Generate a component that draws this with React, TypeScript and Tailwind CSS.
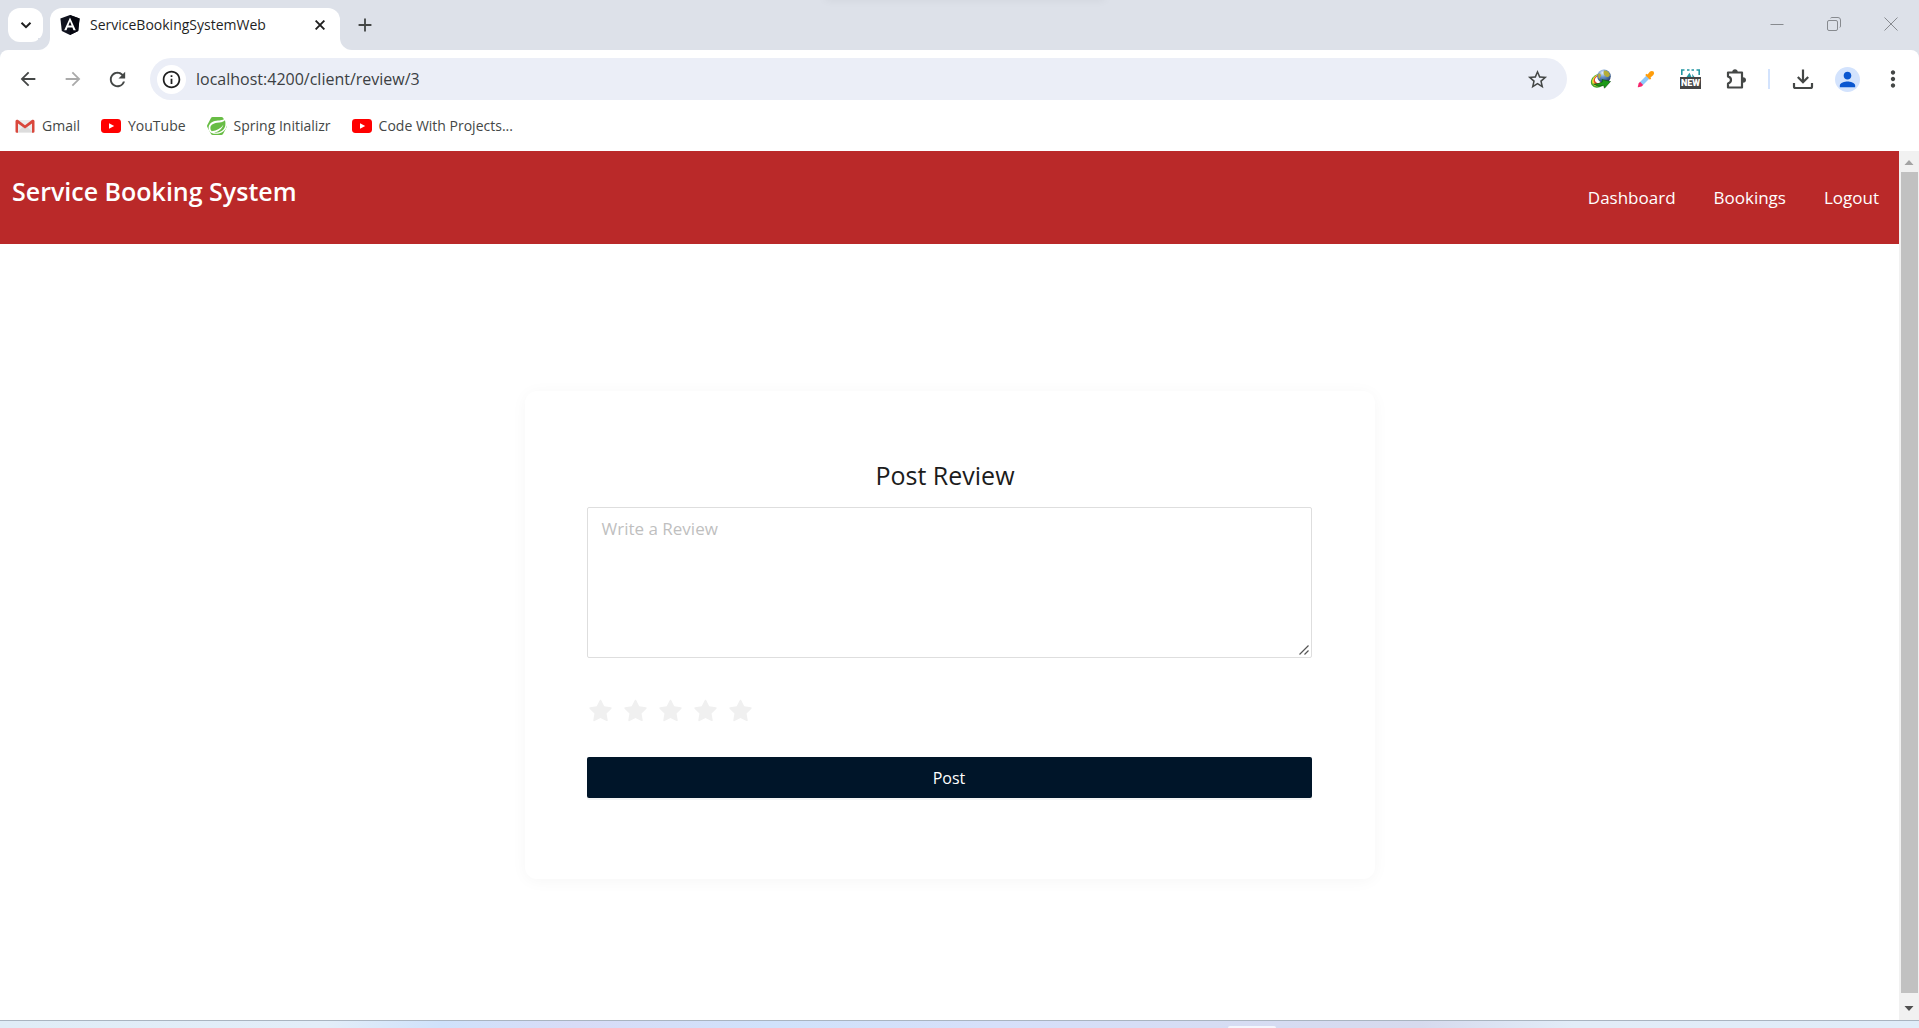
import React, { useState } from "react";
import {
  MdAdd,
  MdArrowBack,
  MdArrowForward,
  MdInfoOutline,
  MdMoreVert,
  MdPerson,
  MdRefresh,
  MdStarBorder,
} from "react-icons/md";
import { AiFillStar } from "react-icons/ai";

function AngularLogo() {
  return (
    <svg viewBox="0 0 20 20" className="size-5 shrink-0" aria-hidden="true">
      <path d="M10 0 19.6 3.4 18.2 16 10 20 1.8 16 .4 3.4Z" fill="#10131f" />
      <path d="M10 0 19.6 3.4 18.2 16 10 20Z" fill="#05060f" />
      <path d="M10 2.4 4.2 15.2H6.5L7.6 12.4H12.4L13.5 15.2H15.8ZM10 6.6 11.6 10.5H8.4Z" fill="#fff" fillRule="evenodd" />
    </svg>
  );
}

function GmailLogo() {
  return (
    <svg viewBox="0 0 20 20" className="size-5" aria-hidden="true">
      <path d="M2 4H18V16.5H2Z" fill="#ececec" />
      <path d="M2 16.5 8 10.5 10 12 12 10.5 18 16.5Z" fill="#dcdcdc" />
      <path d="M.5 5V15.5Q.5 16.8 1.8 16.8H3V7.4L10 12.6 17 7.4V16.8H18.2Q19.5 16.8 19.5 15.5V5Q19 3.2 17.2 3.8L10 9.2 2.8 3.8Q1 3.2 .5 5Z" fill="#d9473c" />
    </svg>
  );
}

function YouTubeLogo() {
  return (
    <svg viewBox="0 0 20 20" className="size-5" aria-hidden="true">
      <rect x="0" y="3" width="20" height="14" rx="3.4" fill="#f00" />
      <path d="M8 7.2 13.2 10 8 12.8Z" fill="#fff" />
    </svg>
  );
}

function SpringLogo() {
  return (
    <svg viewBox="0 0 20 20" className="size-5" aria-hidden="true">
      <path d="M5.600 1H14.400Q15.600 1 16.200 2L20 9Q20.400 10 19.800 11L16 18Q15.400 19 14.200 19H5.800Q4.600 19 4 18L.3 11Q-.2 10 .3 9L4 2Q4.500 1 5.600 1Z" fill="#68bd45" />
      <path d="M19.400 1C16.500 4.800 13.500 4.200 9.500 4.700 4.800 5.300 1.600 8 1.600 12 1.600 15.200 3.600 17.300 6.800 17.700 13.500 18.500 19 15 20 9.500 20.500 6.500 20.300 3.500 19.400 1Z" fill="#fff" />
      <path d="M18 4.300C15.800 6.600 13 6.400 10 6.700 6 7.200 3.400 9.200 3.400 12 3.400 13.500 3.900 14.500 4.700 15.200 10 14.600 14 12.500 16.400 8.800 15 13.300 11.500 15.900 6.800 16.600 12.500 17.300 17.500 14.300 18.300 9.500 18.600 7.500 18.500 5.800 18 4.300Z" fill="#68bd45" />
    </svg>
  );
}

function GlobeArrowIcon() {
  return (
    <svg viewBox="0 0 22 20" className="h-5 w-[22px]" aria-hidden="true">
      <defs>
        <radialGradient id="globe" cx="0.4" cy="0.25" r="0.8">
          <stop offset="0" stopColor="#e8f1fb" />
          <stop offset="0.4" stopColor="#6b95cc" />
          <stop offset="1" stopColor="#16325f" />
        </radialGradient>
      </defs>
      <g transform="rotate(-35 8 12)">
        <ellipse cx="8.500" cy="12" rx="8" ry="6.500" fill="#46a832" />
        <ellipse cx="9" cy="11.700" rx="6.900" ry="5.500" fill="#f7e23a" />
        <ellipse cx="9.500" cy="11.400" rx="5.600" ry="4.500" fill="#e04a33" />
        <ellipse cx="10" cy="11.200" rx="4.400" ry="3.400" fill="#fff" />
      </g>
      <circle cx="14" cy="7.200" r="6.800" fill="url(#globe)" />
      <path d="M14 1.500Q18.500 1 20 6 18.500 9 16 7.500 12.500 5.500 14 1.500ZM8.500 4.500Q10.500 4 11 6.500L9.500 10Q7.500 8 8.500 4.500Z" fill="#b5ad38" />
      <path d="M3.500 15Q8 15.500 12.500 12.800L12 10.500 20.500 12.500 14.500 19.200 13.700 16.500Q8 18.500 3.500 15Z" fill="#1c9a18" stroke="#0b4d0c" strokeWidth="0.600" />
    </svg>
  );
}

function EyedropperIcon() {
  return (
    <svg viewBox="0 0 18 18" className="size-[18px]" aria-hidden="true">
      <path d="M9.500 5.500 12.500 8.500 6 15 3 15 3 12Z" fill="#8ec8fa" />
      <path d="M3 11.800 6.200 15 4.500 16.400 1.200 17.200Q.7 17.300 .8 16.700L1.600 13.500Z" fill="#f5256c" />
      <path d="M8.200 5 9.700 3.800 10.600 4.500 13 1.600Q15 .2 16.600 1.600 17.700 3.200 16.400 5L13.500 7.500 14.200 8.400 12.900 9.800Z" fill="#ff9d0a" />
    </svg>
  );
}

function NewCaptureIcon() {
  return (
    <span className="flex w-[21px] flex-col" aria-hidden="true">
      <svg viewBox="0 0 21 8" className="h-2 w-[21px]">
        <path d="M1.800 6V1H4.500M7 1H9.500M11.500 1H14M16.500 1H19.200V6" fill="none" stroke="#2397a3" strokeWidth="1.600" />
        <path d="M6.500 8 9.500 3.800 11.500 8ZM12 4.800 14.500 8H12.500Z" fill="#2397a3" />
      </svg>
      <span className="flex h-3 items-center justify-center bg-[#444] font-[Roboto] text-[9px] leading-3 font-black text-white">NEW</span>
    </span>
  );
}

function PuzzleIcon() {
  return (
    <svg viewBox="0 0 22 22" className="size-[22px]" fill="none" aria-hidden="true">
      <path d="M3 4.500H17V19.500H3V15.600Q6 14.500 6 12T3 8.400Z" stroke="#444746" strokeWidth="2.200" strokeLinejoin="round" />
      <path d="M7.200 4Q7.500 1.200 10 1.200T12.800 4ZM18 9.200Q21 9.500 21 12T18 14.800Z" fill="#444746" />
    </svg>
  );
}

function DownloadIcon() {
  return (
    <svg viewBox="0 0 22 22" className="size-[22px]" fill="none" stroke="#444746" strokeWidth="2.200" aria-hidden="true">
      <path d="M11 1.500V14M5.800 9 11 14.200 16.200 9M2 15V18.500Q2 20 3.500 20H18.500Q20 20 20 18.500V15" />
    </svg>
  );
}

function WindowControls() {
  const cell = "flex h-12 w-[57px] items-center justify-center text-[#878a8f]";
  return (
    <div className="ml-auto flex">
      <button className={cell} aria-label="Minimize">
        <svg viewBox="0 0 14 14" className="size-3.5" stroke="currentColor"><path d="M.5 7.500H13.500" /></svg>
      </button>
      <button className={cell} aria-label="Restore">
        <svg viewBox="0 0 14 14" className="size-3.5" fill="none" stroke="currentColor">
          <rect x="0.500" y="3.500" width="10" height="10" rx="1.500" />
          <path d="M3.500 1.200Q4 .5 5 .5H11Q13.500 .5 13.500 3V9Q13.500 10.200 12.800 10.500" />
        </svg>
      </button>
      <button className={cell} aria-label="Close window">
        <svg viewBox="0 0 14 14" className="size-3.5" stroke="currentColor"><path d="M.5 .5 13.500 13.500M13.500 .5 .5 13.500" /></svg>
      </button>
    </div>
  );
}

function TabStrip() {
  return (
    <div className="relative flex h-[50px] overflow-hidden bg-[#dde1e9]">
      <div className="absolute -top-2 left-[43%] h-2 w-[280px] shadow-[0_0_10px_rgba(0,0,0,0.06)]" />
      <button className="mt-2 ml-2 flex h-[34px] w-[35px] items-center justify-center rounded-xl bg-white text-[#1f1f1f]" aria-label="Search tabs">
        <svg viewBox="0 0 12 12" className="size-3" fill="none" stroke="currentColor" strokeWidth="2" aria-hidden="true"><path d="M1.500 3.700 6 8.200 10.500 3.700" /></svg>
      </button>
      <div className="relative mt-2 ml-[7px] flex w-[290px] items-center gap-2.5 rounded-t-xl bg-white pr-[15px] pb-2 pl-2.5">
        <span className="absolute bottom-0 -left-3 size-3 bg-white"><span className="block size-3 rounded-br-xl bg-[#dde1e9]" /></span>
        <span className="absolute -right-3 bottom-0 size-3 bg-white"><span className="block size-3 rounded-bl-xl bg-[#dde1e9]" /></span>
        <AngularLogo />
        <span className="text-sm text-[#1f1f1f]">ServiceBookingSystemWeb</span>
        <button className="ml-auto text-[#1f1f1f]" aria-label="Close tab">
          <svg viewBox="0 0 10 10" className="size-2.5" stroke="currentColor" strokeWidth="1.900" aria-hidden="true"><path d="M.6 .6 9.400 9.400M9.400 .6 .6 9.400" /></svg>
        </button>
      </div>
      <button className="ml-[13px] flex h-[50px] w-6 items-center justify-center text-[#444746]" aria-label="New tab"><MdAdd size={22} /></button>
      <WindowControls />
    </div>
  );
}

function Tool({ label, children }: { label: string; children: React.ReactNode }) {
  return (
    <button className="flex h-[42px] w-[45px] shrink-0 items-center justify-center text-[#444746]" aria-label={label}>
      {children}
    </button>
  );
}

function Toolbar() {
  return (
    <div className="bg-[#dde1e9]">
      <div className="flex rounded-t-lg bg-white pt-2 pr-1 pl-[5px]">
        <Tool label="Back"><MdArrowBack size={22} /></Tool>
        <Tool label="Forward"><MdArrowForward size={22} className="text-[#aaa]" /></Tool>
        <Tool label="Reload"><MdRefresh size={23} /></Tool>
        <div className="ml-2.5 flex h-[42px] flex-1 items-center rounded-full bg-[#ebeef7] pr-[18px] pl-[7px]">
          <button className="flex size-[29px] items-center justify-center rounded-full bg-white text-[#1f1f1f]" aria-label="Site information"><MdInfoOutline size={21} /></button>
          <input aria-label="Address" className="h-8 flex-1 bg-transparent pl-2.5 text-base text-[#3c3f43] outline-none" defaultValue="localhost:4200/client/review/3" />
          <button className="text-[#444746]" aria-label="Bookmark this page"><MdStarBorder size={23} /></button>
        </div>
        <div className="w-[11px]" />
        <Tool label="Download manager"><GlobeArrowIcon /></Tool>
        <Tool label="Color picker"><EyedropperIcon /></Tool>
        <Tool label="Capture"><NewCaptureIcon /></Tool>
        <Tool label="Extensions"><PuzzleIcon /></Tool>
        <div className="flex w-[22px] items-center justify-center"><div className="h-5 w-0.5 bg-[#d3e3fd]" /></div>
        <Tool label="Downloads"><DownloadIcon /></Tool>
        <Tool label="Profile">
          <span className="flex size-[25px] items-center justify-center rounded-full bg-[#d3e3fd] text-[#0b57d0]"><MdPerson size={23} /></span>
        </Tool>
        <Tool label="Menu"><MdMoreVert size={26} /></Tool>
      </div>
    </div>
  );
}

const bookmarks = [
  { label: "Gmail", Icon: GmailLogo },
  { label: "YouTube", Icon: YouTubeLogo },
  { label: "Spring Initializr", Icon: SpringLogo },
  { label: "Code With Projects...", Icon: YouTubeLogo },
];

function BookmarksBar() {
  return (
    <nav className="flex h-[51px] items-center gap-[21px] bg-white pl-[15px]" aria-label="Bookmarks">
      {bookmarks.map(({ label, Icon }) => (
        <a key={label} href="#" className="flex items-center gap-[7px] text-sm text-[#444746]"><Icon />{label}</a>
      ))}
    </nav>
  );
}

function AppHeader() {
  return (
    <header className="flex h-[93px] items-center justify-between bg-[#ba2929] pr-5 pl-3 text-white">
      <h1 className="mt-5 self-start text-[25px] leading-10 font-semibold">Service Booking System</h1>
      <nav className="flex gap-[38px] text-[17px]" aria-label="Main">
        <a href="#">Dashboard</a>
        <a href="#">Bookings</a>
        <a href="#">Logout</a>
      </nav>
    </header>
  );
}

function ReviewCard() {
  const [rating, setRating] = useState(0);
  return (
    <form className="mx-auto mt-[147px] mb-32 w-full max-w-[850px] rounded-xl pt-[62px] pr-[63px] pb-[81px] pl-[62px] shadow-[0_2px_16px_rgba(0,0,0,0.04)]" onSubmit={(e) => e.preventDefault()}>
      <h2 className="mb-2.5 pr-2 text-center text-[25px] leading-[44px] font-medium text-[#1c1c1c]">Post Review</h2>
      <div className="relative">
        <textarea aria-label="Write a Review" placeholder="Write a Review" className="block h-[151px] w-full resize-none rounded-xs border border-[#dedede] px-3.5 py-[7px] text-[17px] leading-7 text-[#262626] outline-none placeholder:text-[#bfbfbf]" />
        <svg viewBox="0 0 10 10" className="absolute right-[3px] bottom-[3px] size-2.5" stroke="#555" strokeWidth="1.200" aria-hidden="true">
          <path d="M.5 9.500 9.500 .5M5.500 9.500 9.500 5.500" />
        </svg>
      </div>
      <div className="mt-10 flex gap-2" role="group" aria-label="Rating">
        {[1, 2, 3, 4, 5].map((n) => (
          <button key={n} type="button" aria-label={`${n} star`} onClick={() => setRating(n)} className={n <= rating ? "text-[#fadb14]" : "text-[#f0f0f0]"}>
            <AiFillStar size={27} />
          </button>
        ))}
      </div>
      <button type="submit" className="mt-8 block h-[41px] w-full rounded-xs bg-[#001529] text-base text-white shadow-[0_2px_0_rgba(0,0,0,0.045)]">Post</button>
    </form>
  );
}

function Scrollbar() {
  return (
    <div className="flex w-5 shrink-0 flex-col items-center bg-[#f1f1f1]" aria-hidden="true">
      <svg viewBox="0 0 20 21" className="h-[21px] w-5"><path d="M5.500 14 10 9 14.500 14Z" fill="#a3a3a3" /></svg>
      <div className="w-[17px] flex-1 bg-[#c1c1c1]" />
      <svg viewBox="0 0 20 27" className="h-[27px] w-5"><path d="M5.500 13 10 18 14.500 13Z" fill="#505050" /></svg>
    </div>
  );
}

export default function App() {
  return (
    <div className="flex min-h-screen flex-col bg-white font-['Open_Sans',sans-serif]">
      <TabStrip />
      <Toolbar />
      <BookmarksBar />
      <div className="flex flex-1">
        <main className="min-w-0 flex-1">
          <AppHeader />
          <ReviewCard />
        </main>
        <Scrollbar />
      </div>
      <div className="flex h-2 items-end border-t border-[#a9b4c0] bg-[linear-gradient(90deg,#e0edf7_0%,#e3eef9_17%,#cfe2fb_23%,#d8dcf7_30%,#d0e2fb_40%,#d6e0fa_52%,#d6daee_74%,#e2edf8_82%,#e0edf9_100%)]">
        <div className="ml-[64%] h-0.5 w-12 rounded-t-sm bg-[#f3f6fd]" />
      </div>
    </div>
  );
}
